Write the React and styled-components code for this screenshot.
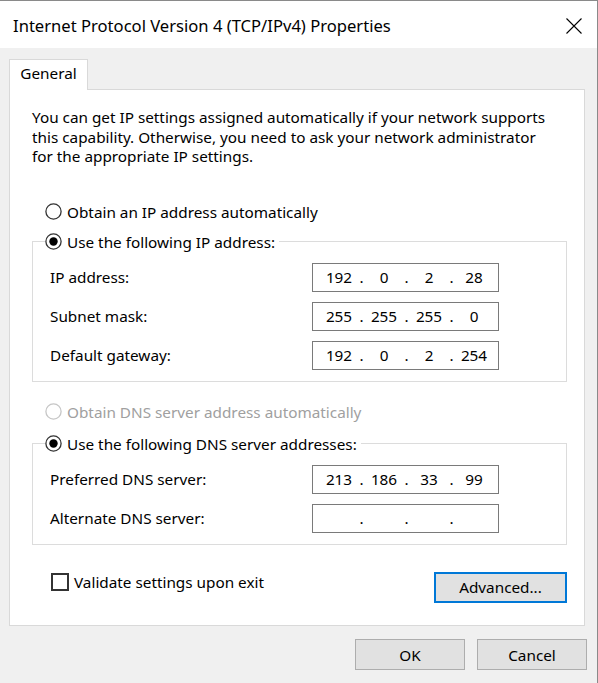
import React from "react";
import styled, { createGlobalStyle } from "styled-components";

const Global = createGlobalStyle`
  html, body { margin: 0; padding: 0; background: #f0f0f0; }
  body { font-family: "Noto Sans", "Open Sans", sans-serif; font-size: 15.3px; color: #000; }
  * { box-sizing: border-box; }
`;

const Window = styled.div`
  width: 598px;
  height: 683px;
  border-top: 1px solid #8a8a8a;
  border-right: 1px solid #8a8a8a;
  background: #f0f0f0;
  display: flex;
  flex-direction: column;
  overflow: hidden;
`;

const TitleBar = styled.div`
  height: 47px;
  background: #fff;
  display: flex;
  align-items: center;
  justify-content: space-between;
  padding: 0 15px 0 13px;
`;

const Title = styled.div`
  font-size: 16.6px;
  color: #000;
  margin-top: 2px;
`;

const CloseBtn = styled.div`
  width: 16px;
  height: 16px;
  display: flex;
  margin-top: 2px;
`;

const Body = styled.div`
  flex: 1;
  padding: 11px 12px 0 9px;
  display: flex;
  flex-direction: column;
`;

const TabStrip = styled.div`
  display: flex;
  height: 30px;
`;

const Tab = styled.div`
  position: relative;
  z-index: 1;
  width: 79px;
  height: 31px;
  background: #fff;
  border: 1px solid #d9d9d9;
  border-bottom: none;
  display: flex;
  align-items: center;
  justify-content: center;
  padding-bottom: 4px;
`;

const Panel = styled.div`
  background: #fff;
  border: 1px solid #d9d9d9;
  height: 537px;
  display: flex;
  flex-direction: column;
  padding: 18px 17px 0 22px;
`;

const Intro = styled.p`
  margin: 0;
  line-height: 19.5px;
  padding-left: 0;
`;

const RadioRow = styled.label`
  display: flex;
  align-items: center;
  height: 20px;
  gap: 5px;
  margin-top: ${(p) => p.$mt || 0}px;
  margin-left: 13px;
  color: ${(p) => (p.$disabled ? "#a0a0a0" : "#000")};
`;

const RadioIcon = ({ checked, disabled }) => (
  <svg width="17" height="17" viewBox="0 0 17 17">
    <circle
      cx="8.5"
      cy="8.5"
      r="7.6"
      fill="#fff"
      stroke={disabled ? "#c6c6c6" : "#333"}
      strokeWidth="1.3"
    />
    {checked && <circle cx="8.5" cy="8.5" r="4.2" fill="#000" />}
  </svg>
);

const Group = styled.fieldset`
  margin: ${(p) => p.$mt || 0}px 0 0 0;
  padding: 0 0 11px 17px;
  border: 1px solid #dcdcdc;
  min-width: 0;
`;

const Legend = styled.legend`
  margin-left: -5px;
  padding: 0 4px 0 0;
  display: flex;
  align-items: center;
  gap: 5px;
  height: 20px;
`;

const Rows = styled.div`
  display: flex;
  flex-direction: column;
  gap: 10px;
  margin-top: 11px;
`;

const FieldRow = styled.div`
  display: grid;
  grid-template-columns: 262px 187px;
  align-items: center;
`;

const FieldLabel = styled.span``;

const IpBox = styled.div`
  height: 29px;
  border: 1px solid #7a7a7a;
  background: #fff;
  display: flex;
  align-items: center;
  padding-left: 8px;
`;

const Octet = styled.span`
  width: 36px;
  text-align: center;
`;

const Dot = styled.span`
  width: 9px;
  text-align: center;
`;

const IpField = ({ value }) => {
  const parts = value ? value.split(".") : ["", "", "", ""];
  const out = [];
  parts.forEach((p, i) => {
    if (i > 0) out.push(<Dot key={"d" + i}>.</Dot>);
    out.push(<Octet key={"o" + i}>{p}</Octet>);
  });
  return <IpBox>{out}</IpBox>;
};

const BottomRow = styled.div`
  display: flex;
  justify-content: space-between;
  align-items: flex-start;
  margin-top: 27px;
  padding-left: 19px;
`;

const CheckRow = styled.label`
  display: flex;
  align-items: center;
  gap: 5px;
  height: 20px;
`;

const CheckBox = styled.span`
  width: 18px;
  height: 18px;
  border: 2px solid #333;
  background: #fff;
  display: inline-block;
`;

const Button = styled.div`
  width: ${(p) => p.$w}px;
  height: ${(p) => p.$h}px;
  background: #e1e1e1;
  border: ${(p) => (p.$focus ? "2px solid #0078d7" : "1px solid #adadad")};
  display: flex;
  align-items: center;
  justify-content: center;
`;

const Footer = styled.div`
  display: flex;
  justify-content: flex-end;
  gap: 12px;
  margin-top: 13px;
  margin-right: -2px;
`;

export default function App() {
  return (
    <>
      <Global />
      <Window>
        <TitleBar>
          <Title>Internet Protocol Version 4 (TCP/IPv4) Properties</Title>
          <CloseBtn>
            <svg width="16" height="16" viewBox="0 0 16 16">
              <path d="M0.5 0.5 L15.5 15.5 M15.5 0.5 L0.5 15.5" stroke="#000" strokeWidth="1.1" />
            </svg>
          </CloseBtn>
        </TitleBar>
        <Body>
          <TabStrip>
            <Tab>General</Tab>
          </TabStrip>
          <Panel>
            <Intro>
              You can get IP settings assigned automatically if your network supports
              <br />
              this capability. Otherwise, you need to ask your network administrator
              <br />
              for the appropriate IP settings.
            </Intro>
            <RadioRow $mt={35}>
              <RadioIcon />
              Obtain an IP address automatically
            </RadioRow>
            <Group $mt={10}>
              <Legend>
                <RadioIcon checked />
                Use the following IP address:
              </Legend>
              <Rows>
                <FieldRow>
                  <FieldLabel>IP address:</FieldLabel>
                  <IpField value="192.0.2.28" />
                </FieldRow>
                <FieldRow>
                  <FieldLabel>Subnet mask:</FieldLabel>
                  <IpField value="255.255.255.0" />
                </FieldRow>
                <FieldRow>
                  <FieldLabel>Default gateway:</FieldLabel>
                  <IpField value="192.0.2.254" />
                </FieldRow>
              </Rows>
            </Group>
            <RadioRow $mt={20} $disabled>
              <RadioIcon disabled />
              Obtain DNS server address automatically
            </RadioRow>
            <Group $mt={12}>
              <Legend>
                <RadioIcon checked />
                Use the following DNS server addresses:
              </Legend>
              <Rows>
                <FieldRow>
                  <FieldLabel>Preferred DNS server:</FieldLabel>
                  <IpField value="213.186.33.99" />
                </FieldRow>
                <FieldRow>
                  <FieldLabel>Alternate DNS server:</FieldLabel>
                  <IpField />
                </FieldRow>
              </Rows>
            </Group>
            <BottomRow>
              <CheckRow>
                <CheckBox />
                Validate settings upon exit
              </CheckRow>
              <Button $w={133} $h={31} $focus>
                Advanced...
              </Button>
            </BottomRow>
          </Panel>
          <Footer>
            <Button $w={110} $h={31}>OK</Button>
            <Button $w={110} $h={31}>Cancel</Button>
          </Footer>
        </Body>
      </Window>
    </>
  );
}
